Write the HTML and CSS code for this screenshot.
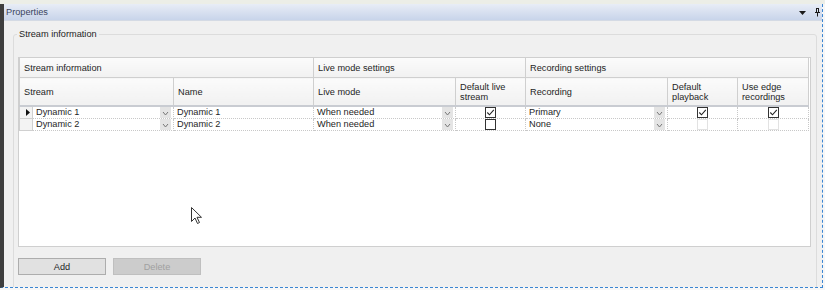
FILE: index.html
```html
<!DOCTYPE html>
<html lang="en">
<head>
  <meta charset="UTF-8">
  <title>Properties</title>
  <link rel="stylesheet" href="styles.css">
</head>
<body>

  <div class="top-strip"></div>

  <div class="window">
    <div class="titlebar">
      <span class="title">Properties</span>
      <span class="tools">
        <svg width="7" height="4" viewBox="0 0 7 4"><path d="M0 0h7L3.5 4z" fill="#1a1a1a"/></svg>
        <svg width="5" height="9" viewBox="0 0 5 9"><path d="M1 0.5h3M1.5 0.5v4M3.5 0.5v4M0 4.5h5M2.5 4.5v4" stroke="#1a1a1a" fill="none"/></svg>
      </span>
    </div>

    <div class="content">
      <fieldset class="group">
        <legend>Stream information</legend>

        <div class="grid">
          <table>
            <colgroup>
              <col style="width:13px"><col style="width:141px"><col style="width:140px"><col style="width:142px">
              <col style="width:70px"><col style="width:142px"><col style="width:70px"><col style="width:71px">
            </colgroup>
            <tr class="band">
              <th colspan="3">Stream information</th>
              <th colspan="2">Live mode settings</th>
              <th colspan="3">Recording settings</th>
            </tr>
            <tr class="heads">
              <th colspan="2">Stream</th>
              <th>Name</th>
              <th>Live mode</th>
              <th>Default live<br>stream</th>
              <th>Recording</th>
              <th>Default<br>playback</th>
              <th>Use edge<br>recordings</th>
            </tr>
            <tr class="row">
              <td class="rowhead"><svg width="4" height="7" viewBox="0 0 4 7"><path d="M0 0l4 3.5L0 7z" fill="#111"/></svg></td>
              <td><div class="combo"><span>Dynamic 1</span><i class="drop"></i></div></td>
              <td>Dynamic 1</td>
              <td><div class="combo"><span>When needed</span><i class="drop"></i></div></td>
              <td class="check"><span class="box on"></span></td>
              <td><div class="combo"><span>Primary</span><i class="drop"></i></div></td>
              <td class="check"><span class="box on"></span></td>
              <td class="check"><span class="box on"></span></td>
            </tr>
            <tr class="row">
              <td class="rowhead"></td>
              <td><div class="combo"><span>Dynamic 2</span><i class="drop"></i></div></td>
              <td>Dynamic 2</td>
              <td><div class="combo"><span>When needed</span><i class="drop"></i></div></td>
              <td class="check"><span class="box"></span></td>
              <td><div class="combo"><span>None</span><i class="drop"></i></div></td>
              <td class="check"><span class="box off"></span></td>
              <td class="check"><span class="box off"></span></td>
            </tr>
          </table>
        </div>

        <div class="buttons">
          <button class="btn">Add</button>
          <button class="btn disabled">Delete</button>
        </div>
      </fieldset>
    </div>

    <svg class="cursor" width="12" height="18" viewBox="0 0 12 18">
      <path d="M0.5 0.5v14l3.5-3.5 2.5 5.5 2-1-2.5-5.2h4.5z" fill="#fff" stroke="#333" stroke-width="1"/>
    </svg>
  </div>

</body>
</html>
```

FILE: styles.css
```css
body {
  margin: 0;
  background: #f7f7f7;
  font-family: 'Liberation Sans', Arial, sans-serif;
  font-size: 9.2px;
  color: #1e1e1e;
}

.top-strip {
  height: 4px;
  background: #eceee7;
}

.window {
  position: relative;
  width: 818px;
  height: 283px;
  border-left: 4px solid #3e3e3e;
  border-right: 1px dashed #3a85d2;
  border-bottom: 1px dashed #3a85d2;
  display: flex;
  flex-direction: column;
}

.titlebar {
  height: 16px;
  display: flex;
  align-items: center;
  justify-content: space-between;
  padding: 0 2px 0 2px;
  background: linear-gradient(#e8edf6, #c8d4ea);
  border-bottom: 1px solid #d4dae4;
}

.title {
  color: #3b4560;
}

.tools {
  display: flex;
  align-items: center;
  gap: 9px;
}

.tools svg:first-child {
  margin-top: 2px;
}

.content {
  flex: 1;
  overflow: hidden;
  background: #f0f0f0;
}

.group {
  margin: 8px 0 0 9px;
  padding: 17px 5px 0 4px;
  width: 793px;
  height: 300px;
  border: 1px solid #dcdcdc;
  border-radius: 3px;
}

.group legend {
  padding: 0 2px;
  margin-left: -1px;
  line-height: 11px;
}

.grid {
  height: 188px;
  background: #fff;
  border: 1px solid #cfcfcf;
}

.grid table {
  width: 789px;
  border-collapse: collapse;
  table-layout: fixed;
}

.grid th {
  text-align: left;
  font-weight: normal;
  padding: 0 0 0 4px;
  background: linear-gradient(#fbfbfb, #f1f1f1);
  border: 1px solid #cfcfcf;
  border-top: 0;
  line-height: 10px;
}

.band th {
  height: 19px;
}

.heads th {
  height: 27px;
  border-bottom: 2px solid #c9ccd2;
}

.row td {
  height: 11px;
  padding: 0 0 0 3px;
  line-height: 11px;
  border-right: 1px dotted #c8c8c8;
  border-bottom: 1px dotted #c8c8c8;
  white-space: nowrap;
  overflow: hidden;
}

.row td.rowhead {
  padding: 0 0 0 6px;
  background: #f3f3f3;
  border: 1px solid #d0d0d0;
  border-top: 0;
}

.rowhead svg {
  display: block;
}

.combo {
  display: flex;
  justify-content: space-between;
  align-items: stretch;
}

.drop {
  width: 11px;
  height: 11px;
  margin-right: 2px;
  background: #e4e4e4 url("data:image/svg+xml,%3Csvg xmlns='http://www.w3.org/2000/svg' width='11' height='11'%3E%3Cpath d='M3 5l2.5 3L8 5' fill='none' stroke='%23777' stroke-width='1'/%3E%3C/svg%3E") no-repeat;
}

.row td.check {
  padding: 0;
  text-align: center;
}

.box {
  display: inline-block;
  vertical-align: top;
  width: 9px;
  height: 9px;
  border: 1px solid #333;
  background: #fff;
}

.box.on {
  background: #fff url("data:image/svg+xml,%3Csvg xmlns='http://www.w3.org/2000/svg' width='9' height='9'%3E%3Cpath d='M1.3 4.5l2.2 2.3L7.8 1.8' fill='none' stroke='%23222' stroke-width='1.1'/%3E%3C/svg%3E") no-repeat;
}

.box.off {
  border-color: #e2e2e2;
}

.buttons {
  display: flex;
  gap: 7px;
  margin-top: 11px;
}

.btn {
  width: 88px;
  height: 17px;
  padding: 0;
  font-family: inherit;
  font-size: 9.2px;
  color: #1e1e1e;
  background: #e1e1e1;
  border: 1px solid #adadad;
}

.btn.disabled {
  color: #a0a0a0;
  background: #cccccc;
  border-color: #bfbfbf;
}

.cursor {
  position: absolute;
  left: 187px;
  top: 203px;
}
```
